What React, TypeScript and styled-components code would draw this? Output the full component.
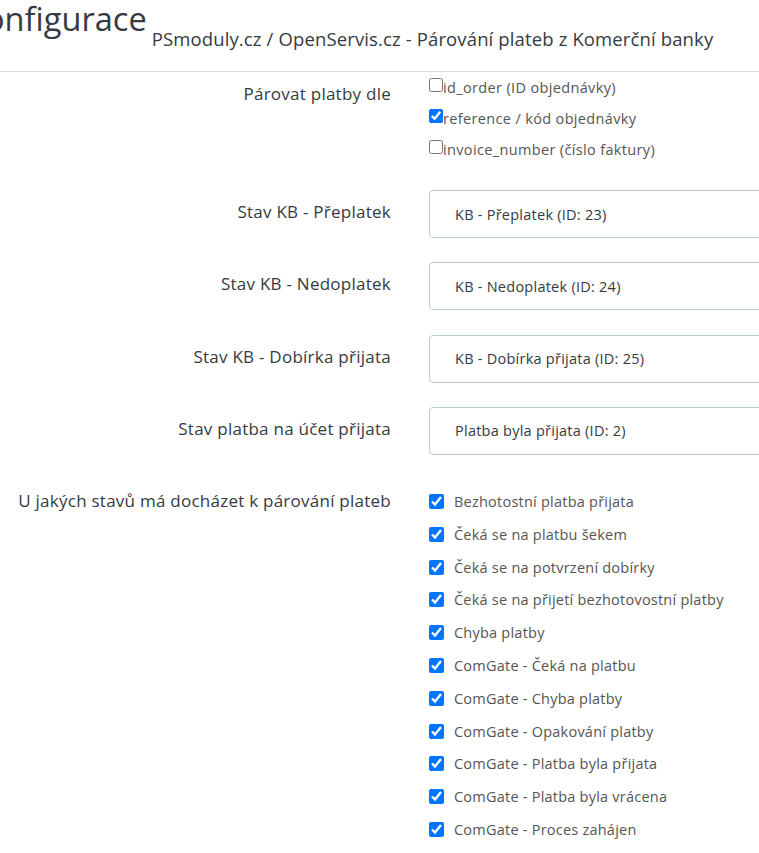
import React from "react";
import styled, { createGlobalStyle } from "styled-components";

const GlobalStyle = createGlobalStyle`
  html, body {
    margin: 0;
    padding: 0;
    background: #fff;
    overflow-x: hidden;
  }
  body {
    font-family: "Open Sans", "Liberation Sans", sans-serif;
    color: #363a41;
  }
`;

const Page = styled.div`
  width: 920px;
`;

const Header = styled.div`
  display: flex;
  align-items: flex-start;
  gap: 5px;
  height: 71px;
  border-bottom: 1px solid #dcdcdc;
`;

const Title = styled.h1`
  margin: 0 0 0 -35px;
  font-size: 32.6px;
  font-weight: 400;
  line-height: 38px;
  color: #363a41;
`;

const Subtitle = styled.span`
  margin-top: 25px;
  font-size: 18.5px;
  letter-spacing: 0.13px;
  line-height: 28px;
  color: #363a41;
`;

const Form = styled.div`
  display: flex;
  flex-direction: column;
`;

const Row = styled.div<{ $gap: number }>`
  display: grid;
  grid-template-columns: 391px 1fr;
  column-gap: 38px;
  margin-bottom: ${(p) => p.$gap}px;
`;

const Label = styled.div`
  padding-top: 10px;
  text-align: right;
  font-size: 17px;
  letter-spacing: 0.25px;
  line-height: 24px;
  color: #363a41;
`;

const CheckList = styled.div<{ $pad: number }>`
  display: flex;
  flex-direction: column;
  padding-top: ${(p) => p.$pad}px;
`;

const PlainItem = styled.label`
  display: flex;
  align-items: center;
  height: 31px;
  font-size: 14.5px;
  letter-spacing: 0.35px;
  color: #555;
`;

const PlainBox = styled.input`
  width: 14px;
  height: 14px;
  margin: 0 0 5px 0;
`;

const StateItem = styled.label`
  display: flex;
  align-items: center;
  height: 32.8px;
  font-size: 14.5px;
  letter-spacing: 0.23px;
  color: #555;
`;

const StateBox = styled.input`
  width: 15px;
  height: 15px;
  margin: 0 10px 0 0;
`;

const Select = styled.select`
  appearance: none;
  box-sizing: border-box;
  width: 100%;
  height: 48px;
  padding: 0 12px 0 25px;
  border: 1px solid #bbcdd2;
  border-radius: 4px;
  background: #fff;
  font-family: "Open Sans", "Liberation Sans", sans-serif;
  font-size: 14.5px;
  letter-spacing: 0.25px;
  color: #363a41;
`;

const matchBy = [
  { text: "id_order (ID objednávky)", checked: false },
  { text: "reference / kód objednávky", checked: true },
  { text: "invoice_number (číslo faktury)", checked: false },
];

const selects = [
  { label: "Stav KB - Přeplatek", value: "KB - Přeplatek (ID: 23)" },
  { label: "Stav KB - Nedoplatek", value: "KB - Nedoplatek (ID: 24)" },
  { label: "Stav KB - Dobírka přijata", value: "KB - Dobírka přijata (ID: 25)" },
  { label: "Stav platba na účet přijata", value: "Platba byla přijata (ID: 2)" },
];

const states = [
  "Bezhotostní platba přijata",
  "Čeká se na platbu šekem",
  "Čeká se na potvrzení dobírky",
  "Čeká se na přijetí bezhotovostní platby",
  "Chyba platby",
  "ComGate - Čeká na platbu",
  "ComGate - Chyba platby",
  "ComGate - Opakování platby",
  "ComGate - Platba byla přijata",
  "ComGate - Platba byla vrácena",
  "ComGate - Proces zahájen",
];

export default function App() {
  return (
    <Page>
      <GlobalStyle />
      <Header>
        <Title>Konfigurace</Title>
        <Subtitle>PSmoduly.cz / OpenServis.cz - Párování plateb z Komerční banky</Subtitle>
      </Header>

      <Form>
        <Row $gap={25}>
          <Label>Párovat platby dle</Label>
          <CheckList $pad={0}>
            {matchBy.map((m) => (
              <PlainItem key={m.text}>
                <PlainBox type="checkbox" defaultChecked={m.checked} />
                {m.text}
              </PlainItem>
            ))}
          </CheckList>
        </Row>

        {selects.map((s) => (
          <Row key={s.label} $gap={24.3}>
            <Label>{s.label}</Label>
            <Select defaultValue={s.value}>
              <option>{s.value}</option>
            </Select>
          </Row>
        ))}

        <Row $gap={0}>
          <Label>U jakých stavů má docházet k párování plateb</Label>
          <CheckList $pad={6}>
            {states.map((s) => (
              <StateItem key={s}>
                <StateBox type="checkbox" defaultChecked />
                {s}
              </StateItem>
            ))}
          </CheckList>
        </Row>
      </Form>
    </Page>
  );
}
